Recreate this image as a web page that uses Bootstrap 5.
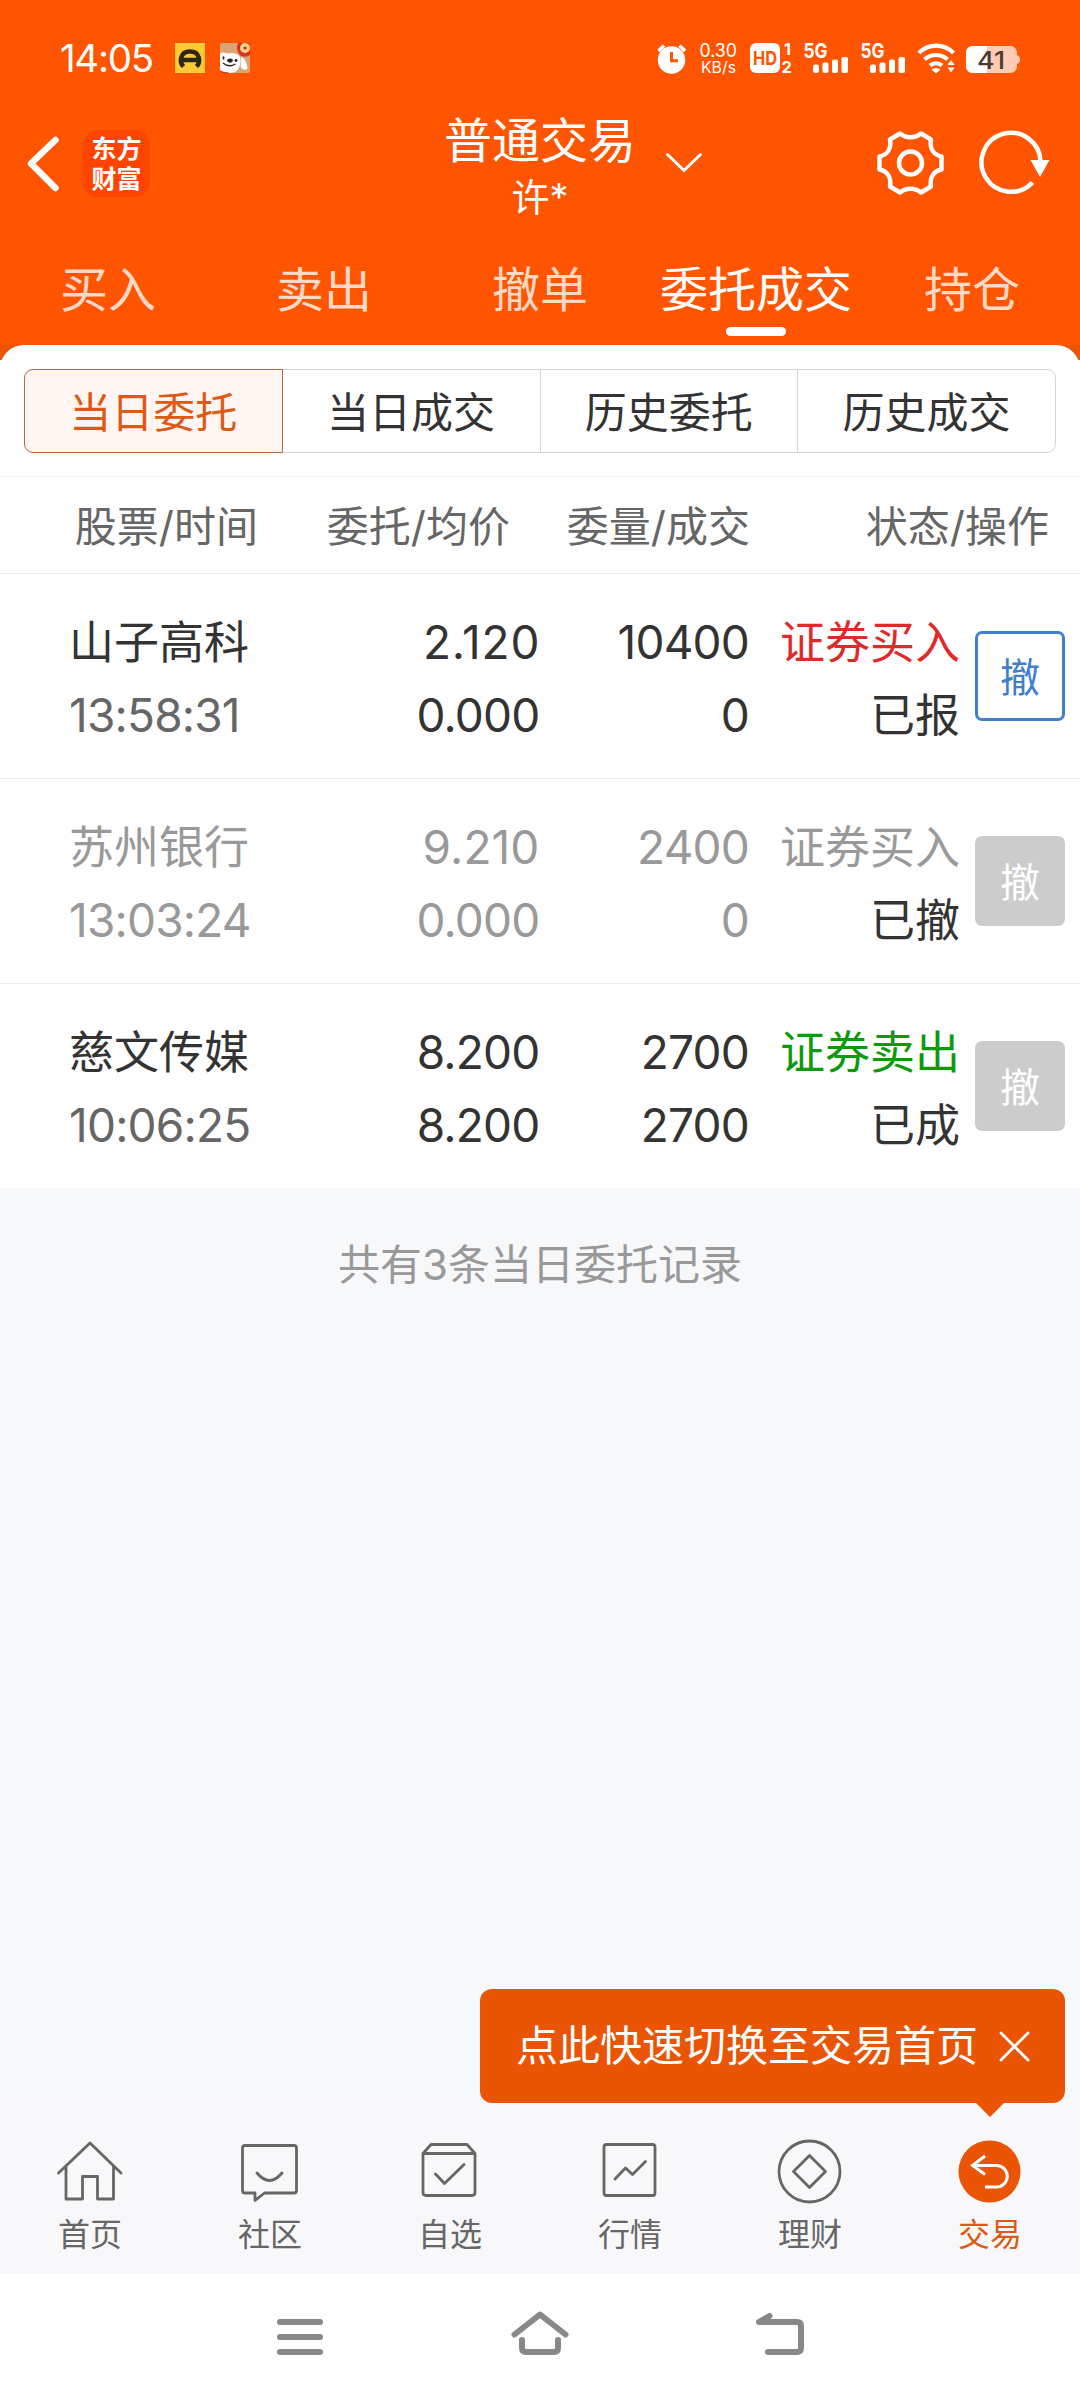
<!DOCTYPE html>
<html lang="zh-CN">
<head>
<meta charset="utf-8">
<meta name="viewport" content="width=device-width, initial-scale=1">
<title>普通交易</title>
<link href="https://cdn.jsdelivr.net/npm/bootstrap@5.3.0/dist/css/bootstrap.min.css" rel="stylesheet">
<style>
  body { font-family: Inter, "Noto Sans CJK SC", sans-serif; background: #f7f8fa; color: #333; width: 1080px; height: 2400px; overflow: hidden; line-height: 1; }
  svg { display: block; flex: none; overflow: visible; }
  .status-bar { height: 115px; padding-left: 60px; padding-top: 1px; }
  .clock { font-size: 38.5px; width: 115px; letter-spacing: -1.3px; padding-top: 1px; }
  .hero { background: #ff5500; height: 345px; color: #fff; }
  .title-bar { height: 97px; }
  .title-side { width: 405px; }
  .title-mid { width: 270px; padding-top: 16px; }
  .brand-logo { width: 67px; height: 67px; border-radius: 15px; background: #ff4400; font-weight: 700; font-size: 25px; line-height: 30px; }
  .title-main { font-size: 48px; line-height: 50px; }
  .title-sub { font-size: 38px; line-height: 62px; }
  .trade-tabs { height: 133px; }
  .trade-tabs .nav-link { padding: 0; font-size: 48px; color: rgba(255,255,255,.78); width: 216px; height: 133px; line-height: 156px; position: relative; border: 0; }
  .trade-tabs .nav-link.active { color: #fff; }
  .trade-tabs .nav-link.active::after { content: ""; position: absolute; left: 78px; bottom: 9px; width: 60px; height: 9px; border-radius: 4.5px; background: #fff; }
  .sheet-back { background: linear-gradient(#e95504 0 15px, #fff 15px); }
  .sheet { background: #fff; border-radius: 24px 24px 0 0; }
  .seg-wrap { padding: 24px 24px 0; height: 132px; border-bottom: 1px solid #f4f4f4; }
  .seg .btn { height: 84px; flex: 1; font-size: 42px; line-height: 85px; padding: 0; color: #333; border: 1px solid #d3d6d8; background: #fff; }
  .seg .btn:first-child { border-radius: 9px 0 0 9px; }
  .seg .btn:last-child { border-radius: 0 9px 9px 0; }
  .seg .btn.active { color: #dc5a14; border-color: #b8683a; background: #fff5f2; z-index: 1; }
  .cols-head { height: 97px; border-bottom: 1px solid #eee; font-size: 42px; color: #666; padding-top: 3px; }
  .order { height: 205px; border-bottom: 1px solid #eee; font-size: 45px; line-height: 73px; padding-right: 15px; }
  .order:last-child { border: 0; height: 204px; }
  .order > div { padding-top: 6px; }
  .c-name { width: 300px; padding-left: 69px; }
  .c-price { width: 239.500px; }
  .c-qty { width: 209.500px; }
  .c-state { width: 211px; }
  .num { font-size: 46px; letter-spacing: -.8px; }
  .num-loose { letter-spacing: .9px; margin-right: -1px; }
  .num-mid { letter-spacing: .1px; }
  .muted, .muted .time { color: #999; }
  .time { color: #666; }
  .buy { color: #e02a2a; }
  .sell { color: #0a9a0a; }
  .dark { color: #333; }
  .btn-undo { width: 90px; height: 90px; border-radius: 7px; font-size: 40px; padding: 0; line-height: 88px; margin-left: auto; }
  .btn-undo.live { border: 3px solid #3f80cc; color: #3f80cc; }
  .btn-undo.off { background: #ccc; color: #fff; border: 0; line-height: 94px; }
  .total { padding-top: 56px; font-size: 42px; line-height: 42px; color: #999; }
  .dock { height: 171px; background: #f8f8fa; color: #666; position: relative; }
  .dock a { width: 180px; color: inherit; text-decoration: none; font-size: 32px; padding-top: 35px; }
  .dock a span { line-height: 36px; margin-top: 9px; }
  .dock a.current { color: #dc5a14; }
  .tip { position: absolute; right: 15px; top: -114px; width: 585px; height: 114px; border-radius: 12px; background: #e95504; color: #fff; font-size: 42px; padding-left: 36px; }
  .tip::after { content: ""; position: absolute; left: 495px; top: 113px; border: 15px solid transparent; border-bottom: 0; border-top-color: #e95504; }
  .sysbar { height: 126px; background: #fff; }
</style>
</head>
<body class="d-flex flex-column">
<header class="hero">
  <div class="status-bar d-flex align-items-center">
    <div class="clock">14:05</div>
    <svg width="75" height="30" viewBox="175 43 75 30">
      <rect x="175" y="43" width="30" height="30" fill="#fdc935"/>
      <path d="M183.500 66.500C179 62 180 51.500 190 51.500S201 62 196.500 66.500M182 60h16" fill="none" stroke="#2b2712" stroke-width="4.500"/>
      <rect x="220" y="43" width="30" height="30" rx="2" fill="#d9a374"/>
      <path d="M220 53.500c3-2 6 0 9 0 5-.5 10 0 11 4 1 5 0 11-4 14-3 2-11 2-16-1z" fill="#fff"/>
      <path d="M241 57c4 0 6 7 6.500 12-3 2-6.500 0-7-3z" fill="#fff"/>
      <path d="M220 70.500q5 2.500 9 1.500l-1 1h-6q-2 0-2-2z" fill="#d8321e"/>
      <path d="M250 43v12q-4 3-9 1-6-5-3-13z" fill="#d8321e"/><circle cx="245" cy="48" r="5" fill="#ffd08a"/><circle cx="245" cy="48" r="1.500" fill="#b52a14"/>
      <path d="M223 63q6 5 12.500 1" fill="none" stroke="#222" stroke-width="1.300"/><ellipse cx="230" cy="60.500" rx="2.800" ry="2" fill="#222"/><ellipse cx="223.500" cy="58" rx="1" ry="1.800" fill="#222"/><circle cx="236" cy="60.500" r="1.400" fill="#222"/>
    </svg>
    <svg width="364" height="30" viewBox="657 43 364 30" style="margin-left:407px" fill="#fff" font-family="Inter">
      <circle cx="671.500" cy="60" r="13.700"/><path d="M658.500 51l5.500-5.500M685 51l-5.500-5.500" stroke="#fff" stroke-width="3.500"/>
      <path d="M671.500 52v8.800h6.500" fill="none" stroke="#ff5500" stroke-width="3"/>
      <text x="699.500" y="57" font-size="19" textLength="37.500" lengthAdjust="spacingAndGlyphs">0.30</text><text x="701" y="73" font-size="15.500" textLength="35" lengthAdjust="spacingAndGlyphs">KB/s</text>
      <rect x="750" y="43" width="30" height="30" rx="6"/><text x="753" y="65" font-size="19" font-weight="700" fill="#ff5500" textLength="24" lengthAdjust="spacingAndGlyphs">HD</text>
      <text x="784" y="55" font-size="16" font-weight="700">1</text><text x="781.500" y="72.500" font-size="16.500" font-weight="700">2</text>
      <g id="sig"><text x="803.500" y="57.500" font-size="20.500" font-weight="700" textLength="24" lengthAdjust="spacingAndGlyphs">5G</text><rect x="813" y="64.500" width="6" height="8.500" rx="2"/><rect x="822.500" y="62.500" width="6" height="10.500" rx="2"/><rect x="832" y="59.500" width="6" height="13.500" rx="2"/><rect x="841.500" y="57" width="6.500" height="16" rx="2"/></g>
      <use href="#sig" x="57"/>
      <g fill="none" stroke="#fff" stroke-width="4.200"><path d="M919 53a24 24 0 0 1 34.500 0M924.500 59.500a17 17 0 0 1 23 0M930 65.500a9.500 9.500 0 0 1 12 0"/></g>
      <path d="M931.500 69.500q4.500-3 9 0l-4.500 4zM947.500 65l3.500-5 3.500 5zM947.500 67.500l3.500 5 3.500-5z"/>
      <rect x="966" y="46" width="51" height="27" rx="6.500" fill="#ffccb3"/><path d="M987 46h-14.500a6.500 6.500 0 0 0-6.500 6.500v14a6.500 6.500 0 0 0 6.500 6.500h14.500z"/><path d="M1017 55q3 1 3 4.500t-3 4.500z" fill="#ffccb3"/>
      <text x="977" y="68.500" font-size="24.500" font-weight="500" fill="#4a3a33" textLength="28" lengthAdjust="spacingAndGlyphs">41</text>
    </svg>
  </div>
  <div class="title-bar d-flex align-items-center">
    <div class="title-side d-flex align-items-center">
      <svg width="83" height="67" viewBox="0 130 83 67"><path d="M55.500 140L31 163.500l24.500 24.500" fill="none" stroke="#fff" stroke-width="6.500" stroke-linecap="round" stroke-linejoin="round"/></svg>
      <div class="brand-logo text-center d-flex flex-column justify-content-center">东方<br>财富</div>
    </div>
    <div class="title-mid text-center"><div class="title-main">普通交易</div><div class="title-sub">许*</div></div>
    <svg width="405" height="97" viewBox="675 115 405 97" fill="none" stroke="#fff" stroke-width="4.500">
      <path d="M667.500 154.500L684 170.500l16.500-16" stroke-width="3" stroke-linecap="round"/>
      <path d="M900 133.500C906 138.500 915 138.500 921 133.500L931 139.500C929.500 148 933 154.500 941.500 156.500V169.500C933 171.500 929.500 178 931 186.500L921 192.500C915 187.500 906 187.500 900 192.500L890 186.500C891.500 178 888 171.500 879.500 169.500V156.500C888 154.500 891.500 148 890 139.500Z" stroke-linejoin="round"/>
      <circle cx="910.500" cy="163" r="11.500"/>
      <path d="M1032.500 182.500A29.500 29.500 0 1 1 1040.500 162"/><path d="M1030.500 160h19l-9.500 17z" fill="#fff" stroke="none"/>
    </svg>
  </div>
  <nav class="nav trade-tabs text-center">
    <a class="nav-link" href="#">买入</a><a class="nav-link" href="#">卖出</a><a class="nav-link" href="#">撤单</a><a class="nav-link active" href="#">委托成交</a><a class="nav-link" href="#">持仓</a>
  </nav>
</header>
<main class="flex-grow-1">
  <div class="sheet-back"><div class="sheet">
    <div class="seg-wrap"><div class="btn-group d-flex seg"><button class="btn active">当日委托</button><button class="btn">当日成交</button><button class="btn">历史委托</button><button class="btn">历史成交</button></div></div>
    <div class="cols-head d-flex align-items-center text-end"><div style="width:258px">股票/时间</div><div style="width:252px">委托/均价</div><div style="width:240px">委量/成交</div><div style="width:299px">状态/操作</div></div>
    <div class="orders">
      <div class="order d-flex align-items-center text-end">
        <div class="c-name text-start">山子高科<br><span class="time num">13:58:31</span></div><div class="c-price num"><span class="num-loose">2.120</span><br>0.000</div><div class="c-qty num">10400<br>0</div><div class="c-state"><span class="buy">证券买入</span><br>已报</div>
        <button class="btn btn-undo live">撤</button>
      </div>
      <div class="order muted d-flex align-items-center text-end">
        <div class="c-name text-start">苏州银行<br><span class="time num">13:03:24</span></div><div class="c-price num"><span class="num-mid">9.210</span><br>0.000</div><div class="c-qty num">2400<br>0</div><div class="c-state">证券买入<br><span class="dark">已撤</span></div>
        <button class="btn btn-undo off">撤</button>
      </div>
      <div class="order d-flex align-items-center text-end">
        <div class="c-name text-start">慈文传媒<br><span class="time num">10:06:25</span></div><div class="c-price num">8.200<br>8.200</div><div class="c-qty num">2700<br>2700</div><div class="c-state"><span class="sell">证券卖出</span><br>已成</div>
        <button class="btn btn-undo off">撤</button>
      </div>
    </div>
  </div></div>
  <div class="total text-center">共有3条当日委托记录</div>
</main>
<nav class="dock d-flex text-center">
  <div class="tip d-flex align-items-center"><span>点此快速切换至交易首页</span><svg class="ms-auto" width="66" height="30" viewBox="0 0 66 30"><path d="M2 2l27 27M29 2L2 29" stroke="#fff" stroke-width="2.800" stroke-linecap="round"/></svg></div>
  <a href="#" class="d-flex flex-column align-items-center"><svg width="70" height="70" viewBox="55 2138 70 70" fill="none" stroke="#666" stroke-width="2.800" stroke-linejoin="round" stroke-linecap="round"><path d="M58.500 2173L90 2143l31 30M66 2167v32h16.500v-22.500h15V2199h16v-32"/></svg><span>首页</span></a>
  <a href="#" class="d-flex flex-column align-items-center"><svg width="70" height="70" viewBox="235 2138 70 70" fill="none" stroke="#666" stroke-width="2.800" stroke-linejoin="round" stroke-linecap="round"><path d="M245 2145.500h49q2.500 0 2.500 2.500v42.500q0 2.500-2.500 2.500h-29.500l-9.500 7.500v-7.500h-10q-2.500 0-2.500-2.500V2148q0-2.500 2.500-2.500zM257 2173q12.500 15 25 0"/></svg><span>社区</span></a>
  <a href="#" class="d-flex flex-column align-items-center"><svg width="70" height="70" viewBox="415 2138 70 70" fill="none" stroke="#666" stroke-width="2.800" stroke-linejoin="round" stroke-linecap="round"><path d="M423 2153.500l8-9h36l8 9v39q0 3-3 3h-46q-3 0-3-3zM423 2153.500h52M435.500 2174l9 9.500 19.500-19"/></svg><span>自选</span></a>
  <a href="#" class="d-flex flex-column align-items-center"><svg width="70" height="70" viewBox="595 2138 70 70" fill="none" stroke="#666" stroke-width="2.800" stroke-linejoin="round" stroke-linecap="round"><rect x="604" y="2144.500" width="51" height="51" rx="2.500"/><path d="M615 2179l10.500-11 7 6.500 13-13"/></svg><span>行情</span></a>
  <a href="#" class="d-flex flex-column align-items-center"><svg width="70" height="70" viewBox="775 2138 70 70" fill="none" stroke="#666" stroke-width="2.800" stroke-linejoin="round"><circle cx="809.500" cy="2171.500" r="30.500"/><path d="M809.500 2155.500l16 16-16 16-16-16z"/></svg><span>理财</span></a>
  <a href="#" class="current d-flex flex-column align-items-center"><svg width="70" height="70" viewBox="955 2138 70 70" fill="none" stroke="#fff" stroke-width="3"><circle cx="989.500" cy="2171.500" r="31" fill="#e95504" stroke="none"/><path d="M985 2156l-12.500 9.500 12.500 9M973 2165.500h23.500a10.700 10.700 0 0 1 0 21.500H985"/></svg><span>交易</span></a>
</nav>
<footer class="sysbar">
  <svg width="1080" height="126" viewBox="0 2274 1080 126" fill="none" stroke="#888" stroke-width="6" stroke-linecap="round" stroke-linejoin="round"><path d="M280 2322h40M280 2337h40M280 2352h40M514.500 2334.500l25.500-20 25.500 20M522 2340v8q0 4 4 4h28q4 0 4-4v-8M769.500 2316l-10.500 6h38q4 0 4 4v22q0 4-4 4h-29"/></svg>
</footer>
<script src="https://cdn.jsdelivr.net/npm/bootstrap@5.3.0/dist/js/bootstrap.bundle.min.js"></script>
</body>
</html>
